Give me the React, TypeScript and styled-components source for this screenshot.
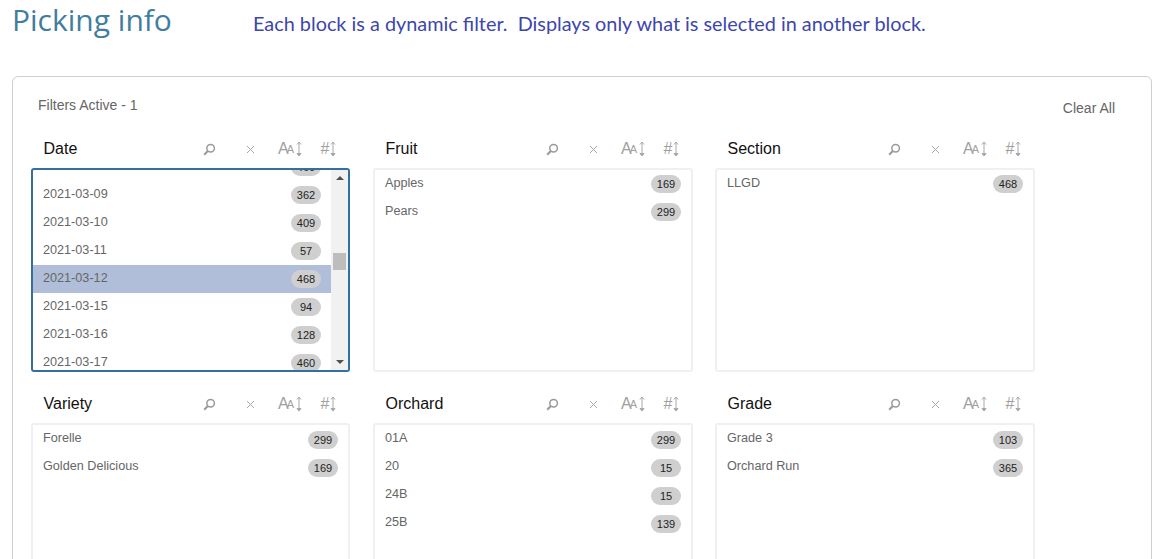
import React from "react";
import styled, { createGlobalStyle } from "styled-components";

const Global = createGlobalStyle`
  html, body { margin: 0; padding: 0; height: 559px; overflow: hidden; background: #fff; }
  body { font-family: "Liberation Sans", Arial, sans-serif; }
`;

const Page = styled.div`
  width: 1161px;
  height: 559px;
  overflow: hidden;
  box-sizing: border-box;
  padding: 0 10px 0 12px;
`;

const Heading = styled.header`
  display: flex;
  align-items: flex-start;
  height: 76px;
`;

const Title = styled.h1`
  margin: 0;
  width: 241px;
  font-family: "Open Sans", sans-serif;
  font-weight: 400;
  font-size: 30px;
  line-height: 40px;
  color: #3f7e9f;
`;

const Note = styled.p`
  margin: 9px 0 0;
  font-family: "Lato", sans-serif;
  font-size: 19.85px;
  line-height: 28px;
  color: #3d46ae;
  white-space: pre;
`;

const Panel = styled.section`
  box-sizing: border-box;
  width: 1140px;
  height: 600px;
  border: 1px solid #cfcfcf;
  border-radius: 6px;
  padding: 20px 36px 0 18px;
`;

const StatusBar = styled.div`
  display: flex;
  justify-content: space-between;
  height: 41px;
  padding: 0 0 0 7px;
`;

const Status = styled.span`
  font-size: 14px;
  line-height: 16px;
  color: #666;
`;

const Clear = styled.span`
  font-size: 14px;
  line-height: 16px;
  margin-top: 3px;
  color: #666;
`;

const Grid = styled.div`
  display: grid;
  grid-template-columns: repeat(3, 319px);
  column-gap: 23px;
  row-gap: 21px;
`;

const Block = styled.div`
  display: flex;
  flex-direction: column;
  &:not(:nth-child(3n + 1)) {
    margin-right: -1px;
  }
`;

const BlockHead = styled.div`
  box-sizing: border-box;
  display: flex;
  align-items: center;
  height: 30px;
  padding: 0 0 8px 12.5px;
`;

const BlockName = styled.span`
  font-size: 16px;
  color: #111;
  flex: 1;
`;

const Tools = styled.div`
  display: grid;
  grid-template-columns: 42px 41px 39px 38px;
  align-items: center;
  justify-items: center;
  width: 160px;
  margin-right: 2px;
`;

const Mark = styled.span`
  display: inline-flex;
  align-items: center;
  color: #a0a0a0;
  font-size: 16px;
  line-height: 16px;
`;

const Small = styled.span`
  font-size: 11px;
  margin: 0 1px 0 -2px;
`;

const ListBox = styled.div<{ $active?: boolean }>`
  box-sizing: border-box;
  display: flex;
  height: 204px;
  border: ${(p) => (p.$active ? "2px solid #33709f" : "2px solid #f0f0f0")};
  border-radius: 3px;
  overflow: hidden;
`;

const Rows = styled.div`
  flex: 1;
  min-width: 0;
  overflow: hidden;
`;

const RowsInner = styled.div<{ $offset?: number }>`
  margin-top: ${(p) => p.$offset ?? 0}px;
`;

const Row = styled.div<{ $selected?: boolean }>`
  display: flex;
  align-items: center;
  justify-content: space-between;
  height: 28px;
  padding: 0 10px;
  background: ${(p) => (p.$selected ? "#b0bed9" : "transparent")};
`;

const RowLabel = styled.span`
  font-size: 12.65px;
  color: #666;
  position: relative;
  top: -1px;
`;

const Count = styled.span`
  box-sizing: border-box;
  min-width: 30px;
  height: 18px;
  margin-left: auto;
  padding: 0 5px;
  border-radius: 9px;
  background: #cfcfcf;
  color: #222;
  font-size: 11px;
  line-height: 18px;
  text-align: center;
  ${Block}:nth-child(n + 4) & {
    position: relative;
    top: 1px;
  }
`;

const Scrollbar = styled.div`
  width: 17px;
  flex: none;
  background: #f1f1f1;
  display: flex;
  flex-direction: column;
  align-items: center;
`;

const Arrow = styled.div<{ $down?: boolean }>`
  width: 0;
  height: 0;
  flex: none;
  margin: 6px 0;
  border-left: 4px solid transparent;
  border-right: 4px solid transparent;
  ${(p) => (p.$down ? "border-top: 4px solid #505050;" : "border-bottom: 4px solid #505050;")}
`;

const Gap = styled.div<{ $h: number }>`
  flex: ${(p) => p.$h} 1 0;
`;

const Thumb = styled.div`
  width: 13px;
  height: 17px;
  flex: none;
  background: #bdbdbd;
`;

const Sort = () => (
  <svg width="8" height="18" viewBox="0 0 8 18" fill="none" stroke="#a8a8a8" strokeWidth="1">
    <path d="M4 2v13" />
    <path d="M2 4.5 4 2l2 2.5" />
    <path d="M2 13.5h4L4 16z" fill="#a8a8a8" />
  </svg>
);

const Lens = () => (
  <svg width="13" height="13" viewBox="0 0 13 13" fill="none" stroke="#9a9a9a" strokeWidth="1.5">
    <circle cx="7.6" cy="5.2" r="3.8" />
    <path d="M4.8 8 1.2 11.8" strokeWidth="2" />
  </svg>
);

const Cross = () => (
  <svg width="9" height="9" viewBox="0 0 9 9" stroke="#a8a8a8" strokeWidth="1">
    <path d="M1 1l7 7M8 1 1 8" />
  </svg>
);

type Item = { label: string; count: number; selected?: boolean };
type BlockData = { name: string; items: Item[]; active?: boolean; offset?: number };

const dates: Item[] = [
  { label: "", count: 460 },
  { label: "2021-03-09", count: 362 },
  { label: "2021-03-10", count: 409 },
  { label: "2021-03-11", count: 57 },
  { label: "2021-03-12", count: 468, selected: true },
  { label: "2021-03-15", count: 94 },
  { label: "2021-03-16", count: 128 },
  { label: "2021-03-17", count: 460 },
];

const blocks: BlockData[] = [
  { name: "Date", items: dates, active: true, offset: -17 },
  { name: "Fruit", items: [{ label: "Apples", count: 169 }, { label: "Pears", count: 299 }] },
  { name: "Section", items: [{ label: "LLGD", count: 468 }] },
  { name: "Variety", items: [{ label: "Forelle", count: 299 }, { label: "Golden Delicious", count: 169 }] },
  {
    name: "Orchard",
    items: [
      { label: "01A", count: 299 },
      { label: "20", count: 15 },
      { label: "24B", count: 15 },
      { label: "25B", count: 139 },
    ],
  },
  { name: "Grade", items: [{ label: "Grade 3", count: 103 }, { label: "Orchard Run", count: 365 }] },
];

export default function App() {
  return (
    <Page>
      <Global />
      <Heading>
        <Title>Picking info</Title>
        <Note>Each block is a dynamic filter.  Displays only what is selected in another block.</Note>
      </Heading>
      <Panel>
        <StatusBar>
          <Status>Filters Active - 1</Status>
          <Clear>Clear All</Clear>
        </StatusBar>
        <Grid>
          {blocks.map((b) => (
            <Block key={b.name}>
              <BlockHead>
                <BlockName>{b.name}</BlockName>
                <Tools>
                  <Lens />
                  <Cross />
                  <Mark>
                    A<Small>A</Small>
                    <Sort />
                  </Mark>
                  <Mark>
                    #<Sort />
                  </Mark>
                </Tools>
              </BlockHead>
              <ListBox $active={b.active}>
                <Rows>
                  <RowsInner $offset={b.offset}>
                    {b.items.map((i) => (
                      <Row key={i.count + i.label} $selected={i.selected}>
                        {i.label && <RowLabel>{i.label}</RowLabel>}
                        <Count>{i.count}</Count>
                      </Row>
                    ))}
                  </RowsInner>
                </Rows>
                {b.active && (
                  <Scrollbar>
                    <Arrow />
                    <Gap $h={67} />
                    <Thumb />
                    <Gap $h={84} />
                    <Arrow $down />
                  </Scrollbar>
                )}
              </ListBox>
            </Block>
          ))}
        </Grid>
      </Panel>
    </Page>
  );
}
